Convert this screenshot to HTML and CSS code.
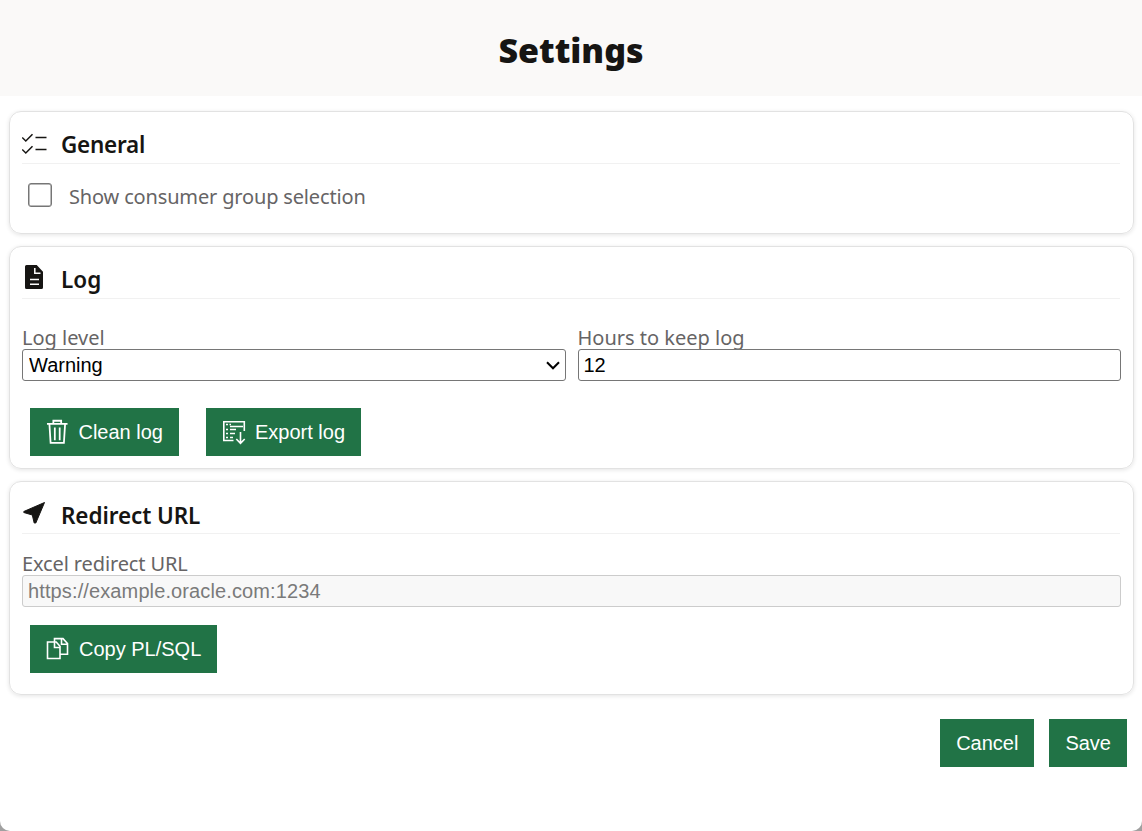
FILE: index.html
```html
<!DOCTYPE html>
<html lang="en">
<head>
<meta charset="utf-8">
<title>Settings</title>
<link rel="stylesheet" href="styles.css">
</head>
<body>
<div class="window">
  <header class="header"><h1 class="title"><span>Settings</span></h1></header>
  <main class="main">
    <section class="card card-general">
      <div class="card-head">
        <svg class="head-icon" viewBox="0 0 26 26" fill="none" stroke="currentColor" stroke-width="1.5"><path d="M.2 8.500 3.800 12 10.500 5.200M.2 20.500 3.800 24 10.500 17.200M13.500 8.500h11M13.500 20.500h11"/></svg>
        <h2 class="card-title t-general"><span>General</span></h2>
      </div>
      <label class="check-row"><input class="checkbox" type="checkbox"><span class="label check-label">Show consumer group selection</span></label>
    </section>
    <section class="card card-log">
      <div class="card-head">
        <svg class="head-icon" viewBox="0 0 26 26"><path fill="currentColor" d="M4.500 1H14.700L21 7.700V23.500a1.500 1.500 0 0 1-1.500 1.500H4.500A1.500 1.500 0 0 1 3 23.500V2.500A1.500 1.500 0 0 1 4.500 1Z"/><path fill="none" stroke="#fff" stroke-width="1.500" d="M12.800 4V9.300H18.500M8 15.500h9M8 20.300h9"/></svg>
        <h2 class="card-title t-log"><span>Log</span></h2>
      </div>
      <div class="fields">
        <label class="field"><span class="label l-level">Log level</span>
          <span class="select-wrap"><select class="control select"><option>Warning</option></select><svg class="chevron" viewBox="0 0 14 9" fill="none" stroke="#000" stroke-width="2"><path d="M1 1.300 7 7.300 13 1.300"/></svg></span>
        </label>
        <label class="field"><span class="label l-hours">Hours to keep log</span>
          <input class="control" type="text" value="12">
        </label>
      </div>
      <div class="actions">
        <button class="btn btn-clean"><svg class="btn-icon" viewBox="0 0 24 26" fill="none" stroke="currentColor" stroke-width="1.800"><path d="M1 4.800h21M7.500 4.800V1.500h8v3.300M3.500 5l1.200 19h13.600L19.500 5M9 8.500v13M14 8.500v13"/></svg>Clean log</button>
        <button class="btn"><svg class="btn-icon" viewBox="0 0 24 26" fill="none" stroke="currentColor" stroke-width="1.600"><path d="M11.500 21.500H1.800V2.800H22.300V12M8 7.500h13M18.500 13v11M14.300 20l4.200 4.300 4.200-4.300"/><path d="M4 5.500h2m1.500 0h1.500M4 10.500h2m2 0h6M4 14.500h2m2 0h5M4 18.500h2m2 0h3" stroke-width="1.400"/></svg>Export log</button>
      </div>
    </section>
    <section class="card card-url">
      <div class="card-head">
        <svg class="head-icon" viewBox="0 0 26 26"><path fill="currentColor" d="M22.500 3.500 13.800 24 12.200 24 10.300 16 1.800 13.500V12.500Z" stroke="currentColor" stroke-linejoin="round"/></svg>
        <h2 class="card-title t-url"><span>Redirect URL</span></h2>
      </div>
      <label class="field"><span class="label l-excel">Excel redirect URL</span>
        <input class="control" type="text" value="https://example.oracle.com:1234" disabled>
      </label>
      <div class="actions">
        <button class="btn"><svg class="btn-icon" viewBox="0 0 24 26" fill="none" stroke="currentColor" stroke-width="1.600"><path d="M1.500 6H10.200L14 10.300V22.500H1.500ZM8.500 6.500V11.500H13.500M8.500 5.500V2.600H17L21.500 7.500V18.300H14.500M15.500 3.500V8.300H21"/></svg>Copy PL/SQL</button>
      </div>
    </section>
    <footer class="footer"><button class="btn">Cancel</button><button class="btn">Save</button></footer>
  </main>
</div>
</body>
</html>
```
FILE: styles.css
```css
* { box-sizing: border-box; }
body { margin: 0; background: #a0a0a0; }
.window { height: 831px; overflow: hidden; background: #fff; border-radius: 0 0 10px 10px; font-family: "Noto Sans", "Open Sans", sans-serif; color: #161513; }
.header { height: 96px; display: flex; align-items: center; justify-content: center; background: #faf9f8; padding-top: 4px; }
.title { margin: 0; font-size: 34px; line-height: 48px; font-weight: 900; }
.main { display: flex; flex-direction: column; gap: 12px; padding: 15px 8px 0 9px; }
.card { padding: 12px 12px 0 12px; border: 1px solid #e2e2e2; border-radius: 12px; box-shadow: 0 1px 4px rgba(0, 0, 0, .11); }
.card-general { height: 123px; }
.card-log { height: 223px; }
.card-url { height: 214px; }
.card-head { display: flex; gap: 13px; height: 40px; margin-right: 1px; padding-top: 5px; border-bottom: 1px solid #f1f1f1; }
.head-icon { width: 26px; height: 26px; }
.card-title { margin: 0; font-size: 22.500px; line-height: 32px; font-weight: 600; }
.t-general { letter-spacing: -.25px; }
.t-url { letter-spacing: -.1px; line-height: 34px; }
.label { color: #666465; font-size: 20px; line-height: 26px; height: 24px; white-space: nowrap; }
.check-row { display: flex; align-items: center; gap: 17px; padding: 19px 0 0 6px; }
.check-label { letter-spacing: -.16px; line-height: 28px; }
.l-excel { letter-spacing: -.12px; }
.checkbox { appearance: none; width: 24px; height: 24px; margin: 0; border: 1.500px solid #767676; border-radius: 3px; background: #fff; box-shadow: inset 0 0 0 .5px #767676; }
.fields { display: grid; grid-template-columns: 1fr 1fr; gap: 12px; padding-top: 14px; }
.field { display: flex; flex-direction: column; padding-top: 12px; }
.card-url .field { padding-top: 17px; }
.control { width: 100%; height: 32px; padding: 0 5px; border: 1px solid #767676; border-radius: 3px; background: #fff; color: #000; font: 20px/28px "Liberation Sans", Arial, sans-serif; }
.control:disabled { background: #f8f8f8; border-color: #ccc; color: #7a7a7a; letter-spacing: .12px; }
.select-wrap { position: relative; height: 32px; }
.select { appearance: none; padding-left: 6px; }
.chevron { position: absolute; right: 6px; top: 12px; width: 14px; height: 9px; }
.actions { display: flex; gap: 27px; padding: 27px 0 0 8px; }
.card-url .actions { padding-top: 18px; }
.btn { display: flex; align-items: center; gap: 9px; height: 48px; padding: 0 16px; border: 0; background: #217346; color: #fff; font: 20px/24px "Liberation Sans", Arial, sans-serif; white-space: nowrap; }
.btn-clean { width: 149px; }
.btn-icon { width: 24px; height: 26px; }
.footer { display: flex; justify-content: flex-end; gap: 15px; padding: 12px 7px 0 0; }
```
